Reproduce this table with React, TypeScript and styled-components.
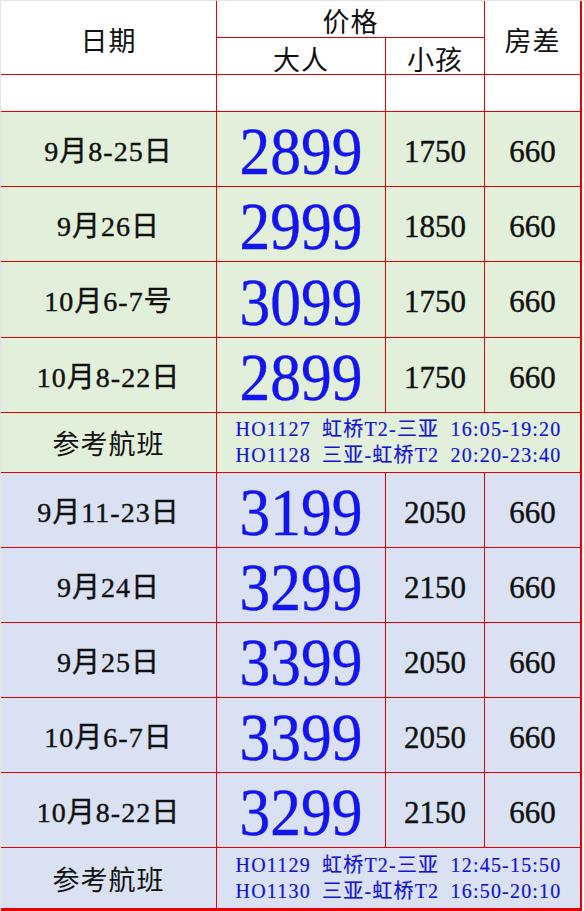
import React from "react";
import styled, { createGlobalStyle } from "styled-components";

interface PriceRow {
  date: string;
  adult: string;
  child: string;
  room: string;
}

interface Block {
  tone: "green" | "blue";
  rows: PriceRow[];
  flights: string[];
}

const blocks: Block[] = [
  {
    tone: "green",
    rows: [
      { date: "9月8-25日", adult: "2899", child: "1750", room: "660" },
      { date: "9月26日", adult: "2999", child: "1850", room: "660" },
      { date: "10月6-7号", adult: "3099", child: "1750", room: "660" },
      { date: "10月8-22日", adult: "2899", child: "1750", room: "660" }
    ],
    flights: [
      "HO1127 虹桥T2-三亚 16:05-19:20",
      "HO1128 三亚-虹桥T2 20:20-23:40"
    ]
  },
  {
    tone: "blue",
    rows: [
      { date: "9月11-23日", adult: "3199", child: "2050", room: "660" },
      { date: "9月24日", adult: "3299", child: "2150", room: "660" },
      { date: "9月25日", adult: "3399", child: "2050", room: "660" },
      { date: "10月6-7日", adult: "3399", child: "2050", room: "660" },
      { date: "10月8-22日", adult: "3299", child: "2150", room: "660" }
    ],
    flights: [
      "HO1129 虹桥T2-三亚 12:45-15:50",
      "HO1130 三亚-虹桥T2 16:50-20:10"
    ]
  }
];

const tones = {
  white: "#ffffff",
  green: "#e2efda",
  blue: "#d9e1f2"
};

const GlobalStyle = createGlobalStyle`
  html, body {
    margin: 0;
    padding: 0;
    background: #ffffff;
  }
  body {
    font-family: "Liberation Serif", "Noto Sans CJK SC", serif;
  }
`;

const Sheet = styled.div`
  width: 584px;
  height: 911px;
  box-sizing: border-box;
  border-top: 1px solid #e4e4e4;
  border-left: 1px solid #e4e4e4;
  display: grid;
  grid-template-columns: 216px 169px 99px 97px;
  grid-template-rows: 37px 37px 37px 75px 75px 76px 75px 60px repeat(5, 75px) 63px;
`;

const Cell = styled.div<{
  $tone?: keyof typeof tones;
  $last?: boolean;
  $bottom?: boolean;
  $shift?: number;
}>`
  box-sizing: border-box;
  display: flex;
  align-items: center;
  justify-content: center;
  padding-top: ${({ $shift }) => $shift || 0}px;
  background: ${({ $tone }) => tones[$tone || "white"]};
  border-right: ${({ $last }) => ($last ? "2px" : "1px")} solid #e80000;
  border-bottom: ${({ $bottom }) => ($bottom ? "3px" : "1px")} solid #e80000;
  color: #111111;
  white-space: nowrap;
`;

const HeadText = styled.span`
  font-family: "Noto Sans CJK SC", sans-serif;
  font-size: 27px;
  line-height: 1;
  letter-spacing: 1px;
`;

const DateText = styled.span`
  font-size: 28px;
  line-height: 1;
  letter-spacing: 1px;
  -webkit-text-stroke: 0.4px currentColor;
`;

const BigPrice = styled.span`
  font-size: 64px;
  line-height: 1;
  color: #1414ee;
  transform: scale(0.96, 1.06);
  -webkit-text-stroke: 0.4px currentColor;
`;

const SmallPrice = styled.span`
  font-size: 31px;
  line-height: 1;
  -webkit-text-stroke: 0.4px currentColor;
`;

const FlightBox = styled.div`
  display: flex;
  flex-direction: column;
  gap: 5px;
  color: #1414d4;
  font-size: 20px;
  line-height: 21px;
  letter-spacing: 1.2px;
  word-spacing: 5px;
  white-space: pre;
  -webkit-text-stroke: 0.2px currentColor;
`;

const App: React.FC = () => {
  return (
    <>
      <GlobalStyle />
      <Sheet>
        <Cell style={{ gridRow: "1 / 3" }} $shift={4}>
          <HeadText>日期</HeadText>
        </Cell>
        <Cell style={{ gridColumn: "2 / 4" }} $shift={2}>
          <HeadText>价格</HeadText>
        </Cell>
        <Cell style={{ gridRow: "1 / 3", gridColumn: 4 }} $last $shift={4}>
          <HeadText>房差</HeadText>
        </Cell>
        <Cell $shift={4}>
          <HeadText>大人</HeadText>
        </Cell>
        <Cell $shift={4}>
          <HeadText>小孩</HeadText>
        </Cell>

        <Cell />
        <Cell />
        <Cell />
        <Cell $last />

        {blocks.map((block, bi) => (
          <React.Fragment key={bi}>
            {block.rows.map((row, ri) => (
              <React.Fragment key={ri}>
                <Cell $tone={block.tone} $shift={5}>
                  <DateText>{row.date}</DateText>
                </Cell>
                <Cell $tone={block.tone} $shift={6}>
                  <BigPrice>{row.adult}</BigPrice>
                </Cell>
                <Cell $tone={block.tone} $shift={4}>
                  <SmallPrice>{row.child}</SmallPrice>
                </Cell>
                <Cell $tone={block.tone} $last $shift={4}>
                  <SmallPrice>{row.room}</SmallPrice>
                </Cell>
              </React.Fragment>
            ))}
            <Cell $tone={block.tone} $bottom={bi === blocks.length - 1}>
              <HeadText>参考航班</HeadText>
            </Cell>
            <Cell
              $tone={block.tone}
              $last
              $bottom={bi === blocks.length - 1}
              style={{ gridColumn: "2 / 5" }}
            >
              <FlightBox>
                {block.flights.map((f) => (
                  <span key={f}>{f}</span>
                ))}
              </FlightBox>
            </Cell>
          </React.Fragment>
        ))}
      </Sheet>
    </>
  );
};

export default App;
